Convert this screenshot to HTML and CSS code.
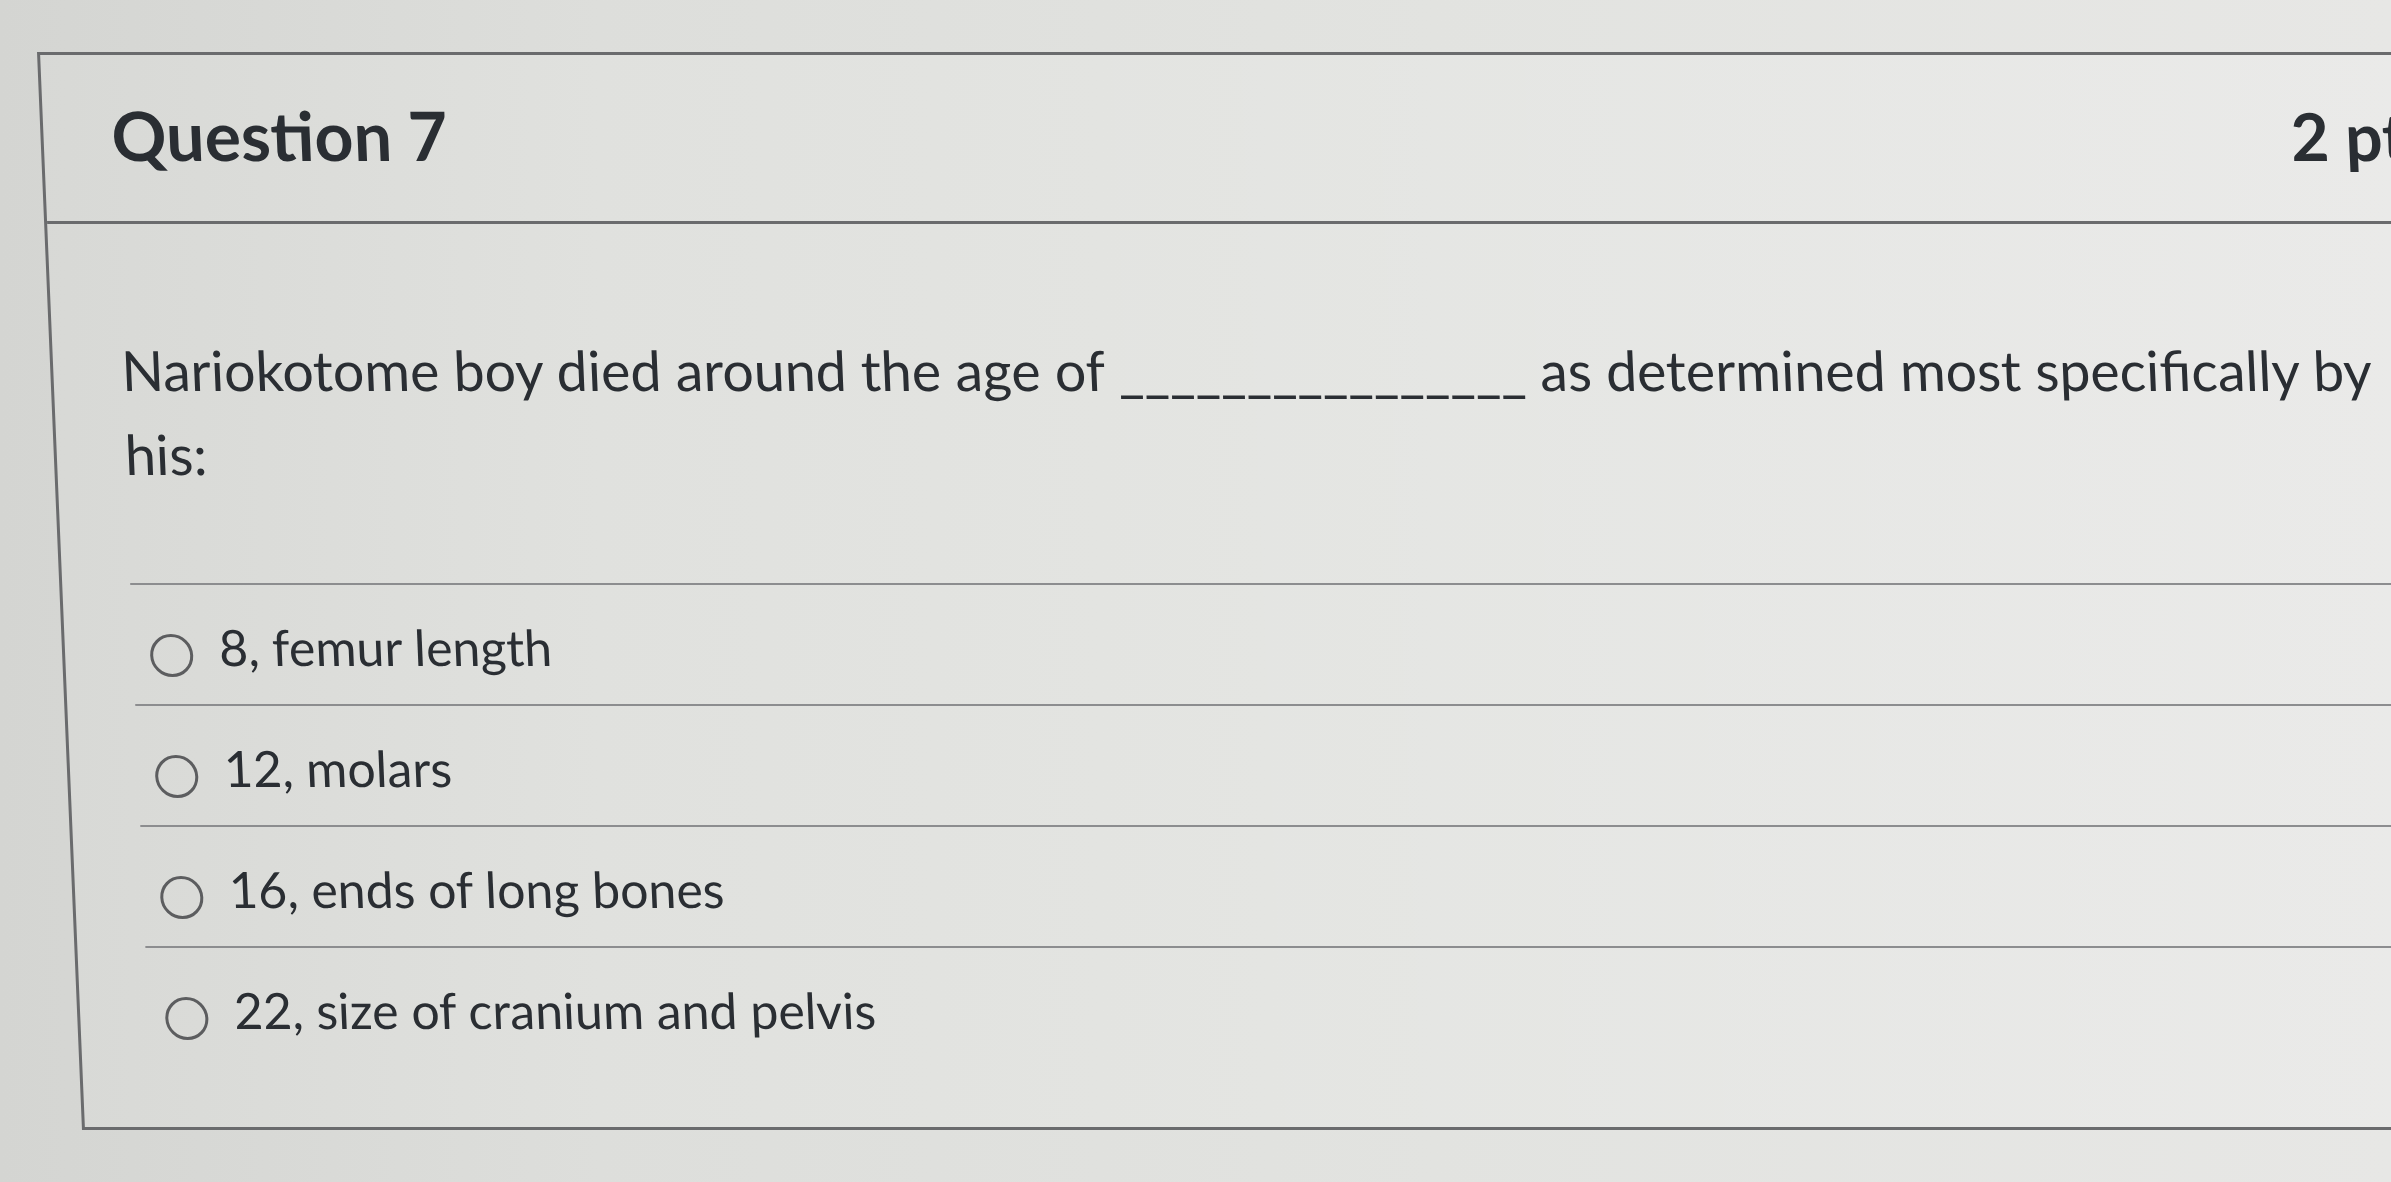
FILE: index.html
```html
<!DOCTYPE html>
<html lang="en">
<head>
<meta charset="utf-8">
<title>Question 7</title>
<link rel="stylesheet" href="styles.css">
</head>
<body>
<div class="page">
  <div class="card">
    <div class="card-header">
      <h2 class="q-title">Question 7</h2>
      <span class="q-points">2 pt</span>
    </div>
    <div class="card-body">
      <p class="q-text">Nariokotome boy died around the age of ________________ as determined most specifically by his:</p>
      <ul class="answers">
        <li class="answer"><span class="radio"></span><span class="label">8, femur length</span></li>
        <li class="answer"><span class="radio"></span><span class="label">12, molars</span></li>
        <li class="answer"><span class="radio"></span><span class="label">16, ends of long bones</span></li>
        <li class="answer"><span class="radio"></span><span class="label">22, size of cranium and pelvis</span></li>
      </ul>
    </div>
  </div>
</div>
</body>
</html>
```
FILE: styles.css
```css
html, body {
  margin: 0;
  height: 100%;
  overflow: hidden;
}
body {
  background: linear-gradient(90deg, #d4d5d2 0%, #dddedb 25%, #e2e3e0 60%, #e7e7e5 100%);
  font-family: Lato, "Open Sans", sans-serif;
  color: #2a2e33;
}
.page {
  padding: 52px 0 0 37px;
}
.card {
  width: 2441px;
  box-sizing: border-box;
  border: 3px solid #6a6b6d;
  transform: skewX(2.39deg);
  transform-origin: 0 0;
  background: linear-gradient(90deg, rgba(255,255,255,0.08), rgba(255,255,255,0.14));
}
.card-header {
  display: flex;
  justify-content: space-between;
  align-items: baseline;
  padding: 38px 72px 43px 68px;
  border-bottom: 3px solid #6a6b6d;
}
.q-title {
  margin: 0;
  font-size: 68px;
  font-weight: 700;
  line-height: 84px;
}
.q-points {
  font-size: 66px;
  font-weight: 700;
  line-height: 84px;
}
.card-body {
  padding: 104px 72px 60px 68px;
}
.q-text {
  margin: 0 0 87px;
  font-size: 55.5px;
  line-height: 84px;
}
.answers {
  list-style: none;
  margin: 0;
  padding: 0;
}
.answer {
  display: flex;
  align-items: flex-start;
  border-top: 2px solid #8c8d8f;
  padding: 32px 0 27px 17px;
  font-size: 50px;
  line-height: 60px;
}
.radio {
  flex: none;
  width: 43px;
  height: 43px;
  box-sizing: border-box;
  border: 3px solid #5c5d5f;
  border-radius: 50%;
  margin: 17px 26px 0 0;
}
```
